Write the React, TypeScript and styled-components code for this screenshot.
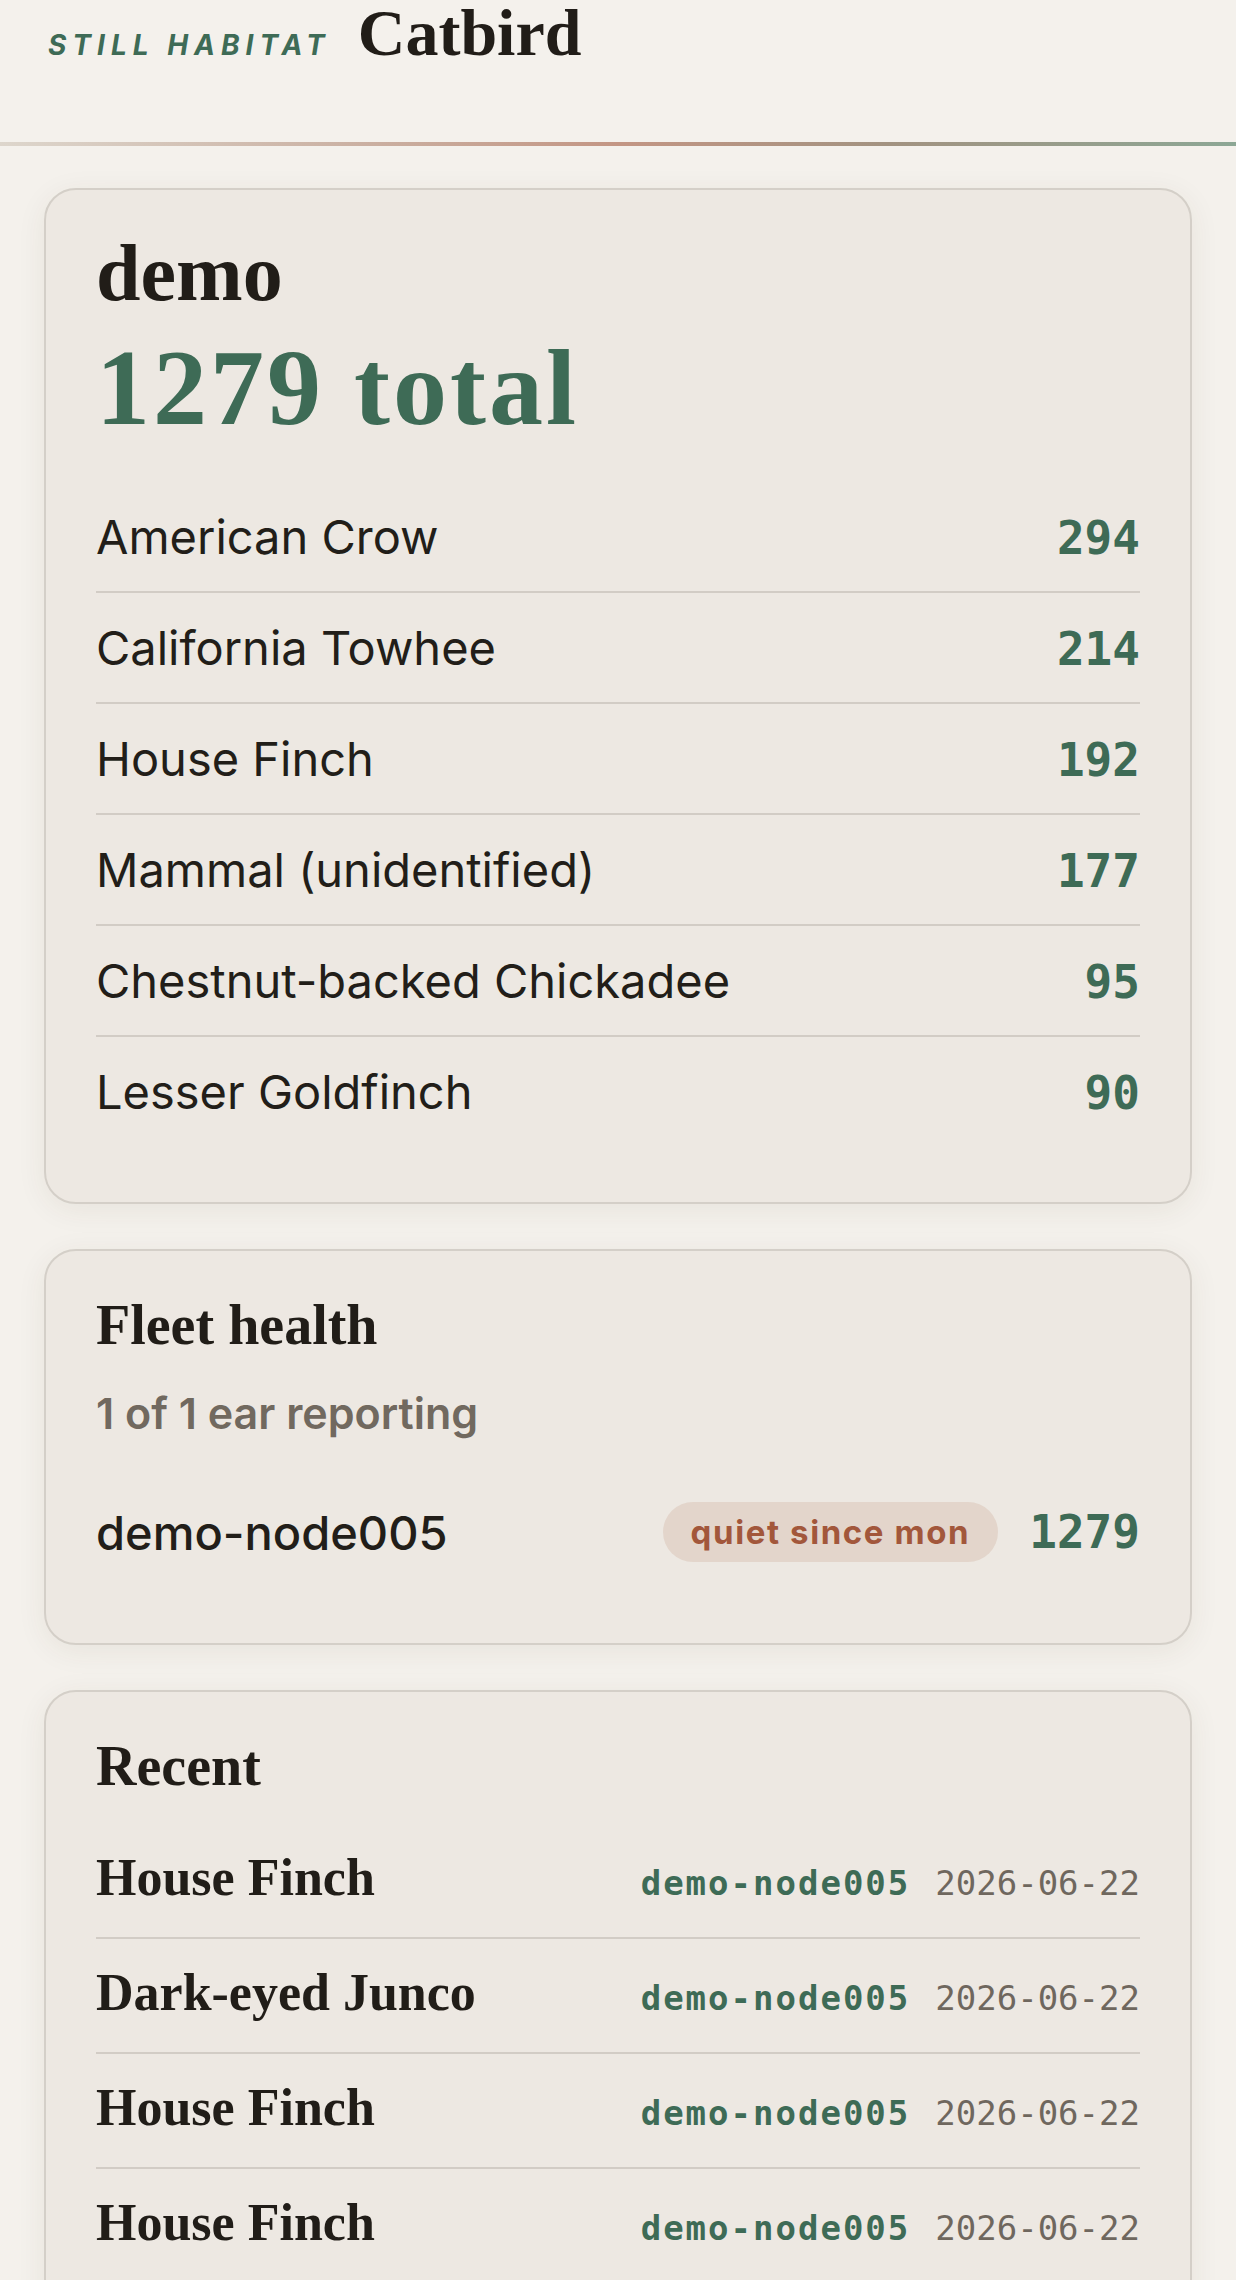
import React from "react";
import styled, { createGlobalStyle } from "styled-components";

const serif = `"Liberation Serif", "DejaVu Serif", serif`;
const sans = `Inter, "Noto Sans", "Liberation Sans", sans-serif`;
const mono = `"DejaVu Sans Mono", "Liberation Mono", monospace`;

const GlobalStyle = createGlobalStyle`
  * { box-sizing: border-box; }
  html, body {
    margin: 0;
    padding: 0;
    background: #f4f1ec;
  }
  body {
    font-family: ${sans};
    color: #221e19;
    -webkit-font-smoothing: antialiased;
  }
`;

const Header = styled.header`
  display: flex;
  align-items: baseline;
  gap: 27px;
  height: 146px;
  padding: 0 48px;
  border-style: solid;
  border-width: 0 0 4px;
  border-image: linear-gradient(90deg, #ddd6cc 0%, #cbb2a4 28%, #c39684 50%, #a29381 72%, #8ca795 100%) 1;
`;

const Kicker = styled.span`
  font-family: ${sans};
  font-style: italic;
  font-weight: 700;
  font-size: 28px;
  letter-spacing: 6px;
  text-transform: uppercase;
  color: #3e6b56;
`;

const Brand = styled.h1`
  margin: 0;
  font-family: ${serif};
  font-weight: 700;
  font-size: 66px;
  line-height: 1;
  color: #211d18;
`;

const Main = styled.main`
  display: flex;
  flex-direction: column;
  gap: 45px;
  padding: 42px 44px 80px;
`;

const Card = styled.section`
  background: #ede8e2;
  border: 2px solid #d4cfc8;
  border-radius: 32px;
  padding: 42px 50px 56px;
  box-shadow: 0 6px 30px rgba(70, 55, 35, 0.07);
`;

const SiteName = styled.h2`
  margin: 0;
  font-family: ${serif};
  font-weight: 700;
  font-size: 80px;
  line-height: 82px;
  color: #211d18;
`;

const Total = styled.div`
  margin-top: 14px;
  font-family: ${serif};
  font-weight: 700;
  font-size: 108px;
  line-height: 120px;
  letter-spacing: 3px;
  color: #3e6b56;
`;

const SpeciesList = styled.ul`
  list-style: none;
  margin: 34px 0 0;
  padding: 0;
`;

const SpeciesRow = styled.li`
  display: flex;
  align-items: baseline;
  justify-content: space-between;
  padding: 26px 0;
  line-height: 57px;
  border-bottom: 2px solid #d2ccc5;

  &:last-child {
    border-bottom: none;
  }
`;

const SpeciesName = styled.span`
  font-size: 47px;
  font-weight: 400;
  color: #221e19;
`;

const Count = styled.span`
  font-family: ${mono};
  font-weight: 700;
  font-size: 46px;
  line-height: 1;
  color: #3e6b56;
`;

const CardTitle = styled.h3`
  margin: 0;
  font-family: ${serif};
  font-weight: 700;
  font-size: 56px;
  line-height: 64px;
  color: #211d18;
`;

const Subtle = styled.div`
  margin-top: 32px;
  font-size: 43px;
  font-weight: 600;
  line-height: 48px;
  color: #71695f;
`;

const NodeRow = styled.div`
  display: flex;
  align-items: center;
  gap: 31px;
  margin-top: 40px;
  padding: 25px 0;
`;

const NodeName = styled.span`
  flex: 1;
  font-size: 47px;
  font-weight: 500;
  color: #221e19;
`;

const Badge = styled.span<{ $tone?: "warn" | "ok" }>`
  display: inline-flex;
  align-items: center;
  height: 60px;
  padding: 0 28px;
  border-radius: 30px;
  font-size: 33px;
  font-weight: 700;
  letter-spacing: 1.6px;
  background: ${(p) => (p.$tone === "ok" ? "#d6e2da" : "#e3d5cb")};
  color: ${(p) => (p.$tone === "ok" ? "#3e6b56" : "#a2573b")};
`;

const RecentList = styled.ul`
  list-style: none;
  margin: 26px 0 0;
  padding: 0;
`;

const RecentRow = styled.li`
  display: flex;
  align-items: baseline;
  gap: 25px;
  padding: 24px 0 29px;
  line-height: 60px;
  border-bottom: 2px solid #d2ccc5;

  &:last-child {
    border-bottom: none;
  }
`;

const Bird = styled.span`
  flex: 1;
  font-family: ${serif};
  font-weight: 700;
  font-size: 52px;
  color: #211d18;
`;

const Node = styled.span`
  font-family: ${mono};
  font-weight: 700;
  font-size: 34px;
  line-height: 1;
  letter-spacing: 2px;
  color: #3e6b56;
`;

const When = styled.span`
  font-family: ${mono};
  font-size: 34px;
  line-height: 1;
  color: #6f675e;
`;

const species = [
  { name: "American Crow", count: 294 },
  { name: "California Towhee", count: 214 },
  { name: "House Finch", count: 192 },
  { name: "Mammal (unidentified)", count: 177 },
  { name: "Chestnut-backed Chickadee", count: 95 },
  { name: "Lesser Goldfinch", count: 90 },
];

const recent = [
  { bird: "House Finch", node: "demo-node005", date: "2026-06-22" },
  { bird: "Dark-eyed Junco", node: "demo-node005", date: "2026-06-22" },
  { bird: "House Finch", node: "demo-node005", date: "2026-06-22" },
  { bird: "House Finch", node: "demo-node005", date: "2026-06-22" },
  { bird: "American Crow", node: "demo-node005", date: "2026-06-22" },
];

export default function App() {
  return (
    <>
      <GlobalStyle />
      <Header>
        <Kicker>Still Habitat</Kicker>
        <Brand>Catbird</Brand>
      </Header>
      <Main>
        <Card>
          <SiteName>demo</SiteName>
          <Total>1279 total</Total>
          <SpeciesList>
            {species.map((s) => (
              <SpeciesRow key={s.name}>
                <SpeciesName>{s.name}</SpeciesName>
                <Count>{s.count}</Count>
              </SpeciesRow>
            ))}
          </SpeciesList>
        </Card>

        <Card>
          <CardTitle>Fleet health</CardTitle>
          <Subtle>1 of 1 ear reporting</Subtle>
          <NodeRow>
            <NodeName>demo-node005</NodeName>
            <Badge $tone="warn">quiet since mon</Badge>
            <Count>1279</Count>
          </NodeRow>
        </Card>

        <Card>
          <CardTitle>Recent</CardTitle>
          <RecentList>
            {recent.map((r, i) => (
              <RecentRow key={i}>
                <Bird>{r.bird}</Bird>
                <Node>{r.node}</Node>
                <When>{r.date}</When>
              </RecentRow>
            ))}
          </RecentList>
        </Card>
      </Main>
    </>
  );
}
